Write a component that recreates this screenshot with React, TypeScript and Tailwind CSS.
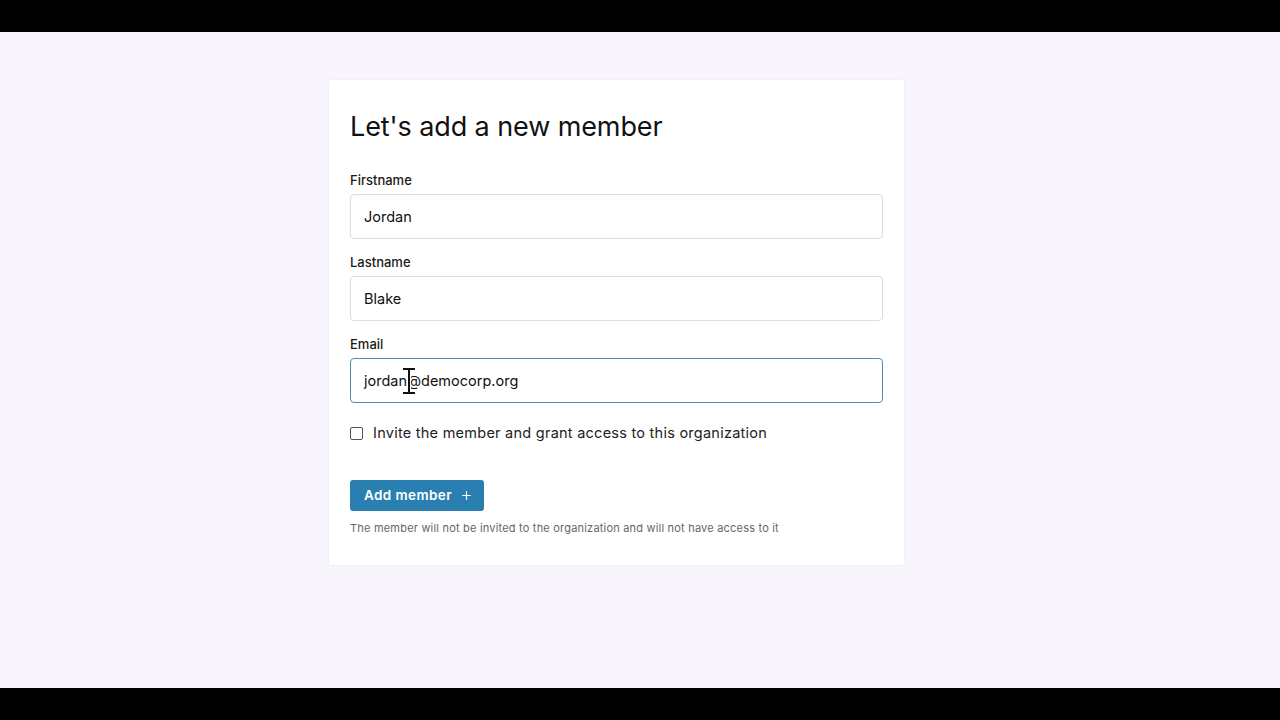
import { Plus } from 'lucide-react';

const fields = [
  { label: 'Firstname', value: 'Jordan', focused: false },
  { label: 'Lastname', value: 'Blake', focused: false },
  { label: 'Email', value: 'jordan@democorp.org', focused: true },
];

function TextCursor() {
  // mouse I-beam sitting over the email field
  return (
    <svg
      className="absolute left-[51px] top-[8px]"
      width="14"
      height="28"
      viewBox="0 0 14 28"
      fill="none"
    >
      <path
        d="M2 2h10M2 26h10M7 2v24"
        stroke="#fff"
        strokeWidth="4"
        strokeLinecap="square"
      />
      <path
        d="M2 2h10M2 26h10M7 2v24"
        stroke="#111"
        strokeWidth="2"
        strokeLinecap="square"
      />
    </svg>
  );
}

export default function App() {
  return (
    <div className="min-h-screen bg-black font-['Inter','Liberation_Sans',sans-serif] text-[#111]">
      <div className="h-[32px]" />
      <main className="h-[656px] bg-[#f8f5fd] pt-[48px]">
        <div className="ml-[329px] w-[575px] rounded-[2px] bg-white px-[21px] pt-[29px] pb-[30px] shadow-[0_0_2px_rgba(120,100,160,0.12)]">
          <h1 className="text-[27px] leading-[36px] font-normal tracking-[-0.1px]">
            Let's add a new member
          </h1>

          <div className="mt-[26px] flex flex-col gap-[14px]">
            {fields.map((f) => (
              <div key={f.label}>
                <label className="mb-[5px] block text-[13px] leading-[18px] font-medium text-[#1a1a1a]">
                  {f.label}
                </label>
                <div
                  className={
                    f.focused
                      ? 'relative flex h-[45px] items-center rounded-[4px] border border-[#4f8fae] bg-white px-[13px] text-[14.5px]'
                      : 'relative flex h-[45px] items-center rounded-[4px] border border-[#dddddd] bg-white px-[13px] text-[14.5px]'
                  }
                >
                  {f.value}
                  {f.focused && <TextCursor />}
                </div>
              </div>
            ))}
          </div>

          <label className="mt-[20px] flex items-center gap-[10px] text-[14.5px] leading-[20px] tracking-[0.25px] text-[#222]">
            <span className="h-[13px] w-[13px] rounded-[2px] border border-[#555] bg-white" />
            Invite the member and grant access to this organization
          </label>

          <button className="mt-[37px] flex h-[31px] w-[134px] items-center gap-[8px] rounded-[3px] bg-[#2a7fb1] pl-[14px] text-[13.5px] font-semibold tracking-[0.4px] text-white">
            Add member
            <Plus size={13} strokeWidth={2.2} />
          </button>

          <p className="mt-[10px] text-[11px] leading-[14px] tracking-[0.2px] text-[#666]">
            The member will not be invited to the organization and will not have access to it
          </p>
        </div>
      </main>
      <div className="h-[32px]" />
    </div>
  );
}
